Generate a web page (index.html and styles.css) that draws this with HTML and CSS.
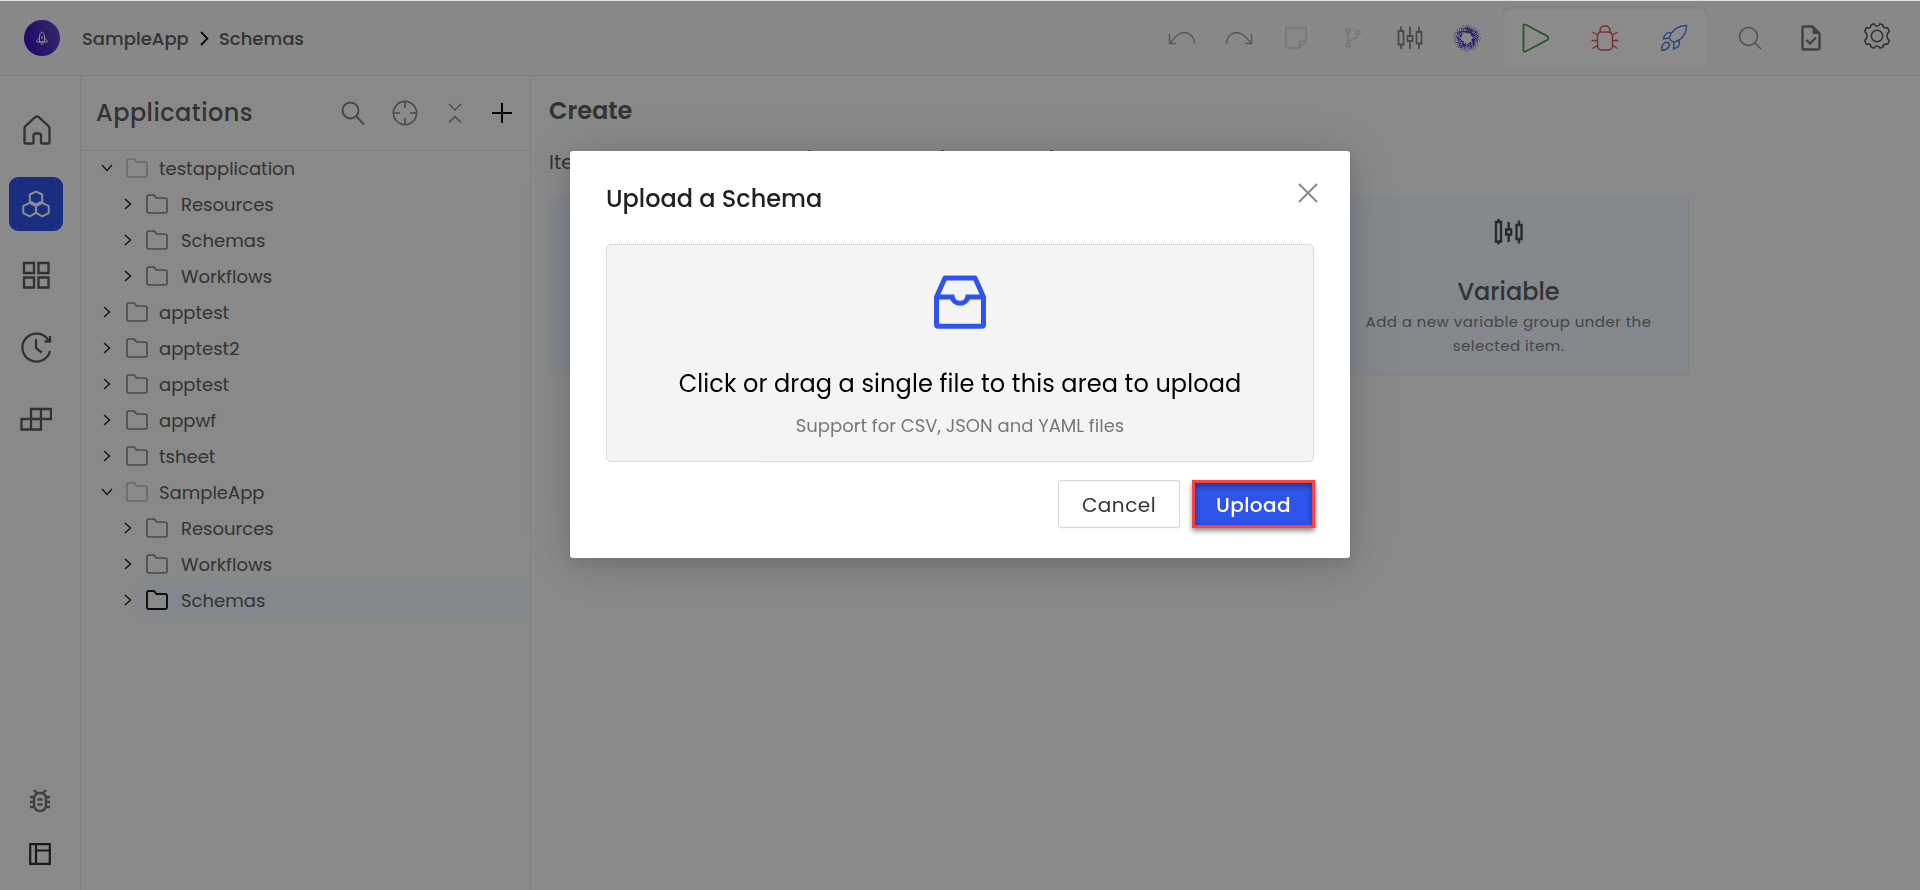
FILE: index.html
```html
<!DOCTYPE html>
<html lang="en">
<head>
<meta charset="utf-8">
<title>SampleApp - Schemas</title>
<link rel="stylesheet" href="styles.css">
</head>
<body>
<svg class="defs" aria-hidden="true">
  <symbol id="folder" viewBox="0 0 22 20"><path d="M1 3Q1 1 3 1H7.500Q8.500 1 9 2L10.500 4H19Q21 4 21 6V17Q21 19 19 19H3Q1 19 1 17Z"/></symbol>
  <symbol id="right" viewBox="0 0 8 12"><path d="M1 1L6.500 6L1 11"/></symbol>
  <symbol id="down" viewBox="0 0 12 8"><path d="M1 1L6 6.500L11 1"/></symbol>
</svg>
<div class="app">
  <header class="topbar">
    <div class="logo"><svg width="12" height="14" viewBox="0 0 12 14"><path d="M3.500 11V5Q3.800 2 6 .8Q8.200 2 8.500 5V11ZM3.500 7L1 9.500V11H11V9.500L8.500 7M6 5V8M4.500 13H7.500"/></svg></div>
    <nav class="crumbs">
      <span class="crumb-app">SampleApp</span>
      <svg width="9" height="15" viewBox="0 0 9 15"><path d="M1 1L7.500 7.500L1 14"/></svg>
      <span class="crumb-page">Schemas</span>
    </nav>
    <div class="tools">
      <svg class="faint undo" width="28" height="14" viewBox="0 0 28 14"><path d="M1.500 3V12.500H8M1.500 12.500L9 4.500Q16-1 22 3.500Q26.500 7 26.500 12.500"/></svg>
      <svg class="faint redo" width="28" height="14" viewBox="0 0 28 14"><path d="M26.500 3V12.500H20M26.500 12.500L19 4.500Q12-1 6 3.500Q1.500 7 1.500 12.500"/></svg>
      <svg class="ghost note" width="22" height="22" viewBox="0 0 22 22"><path d="M1 2.500Q1 1 2.500 1H19.500Q21 1 21 2.500V14.500L14.500 21H2.500Q1 21 1 19.500ZM14.500 21V14.500H21"/></svg>
      <svg class="ghost branch" width="16" height="20" viewBox="0 0 16 20"><circle cx="3" cy="3" r="2"/><circle cx="3" cy="17" r="2"/><circle cx="13" cy="4.500" r="2"/><path d="M3 5V15M13 6.500Q13 9.500 9 11L3 13"/></svg>
      <svg class="dark candles" width="26" height="24" viewBox="0 0 26 24"><path d="M1.500 5H6.500V18.500H1.500ZM4 .5V5M4 18.500V23M10.500 10H15.500V15H10.500ZM13 .5V10M13 15V23M19.500 6H24.500V17.500H19.500ZM22 .5V6M22 17.500V23"/></svg>
      <svg class="sparkle" id="sparkle" width="28" height="28" viewBox="0 0 28 28"></svg>
    </div>
    <div class="runbox">
      <svg class="play" width="28" height="30" viewBox="0 0 28 30"><path d="M1.500 3Q1.500.5 4 1.800L25 13Q27.500 15 25 17L4 28.200Q1.500 29.500 1.500 27Z"/></svg>
      <svg class="bug" width="28" height="26" viewBox="0 0 28 26"><path d="M9 7V6Q9 1 14 1Q19 1 19 6V7M11 7H17Q21.500 7 21.500 11.500V20Q21.500 25 17 25H11Q6.500 25 6.500 20V11.500Q6.500 7 11 7ZM6.500 10L1.500 7M21.500 10L26.500 7M6.500 15.500H.5M21.500 15.500H27.500M6.500 20.500L1.500 23.500M21.500 20.500L26.500 23.500"/></svg>
      <svg class="rocket" width="28" height="28" viewBox="0 0 28 28"><path d="M26.500 1.500Q17 1.500 11.500 9L9 14Q11 17.500 14 18.500L19 16Q26.500 11 26.500 1.500ZM11.500 9Q6.500 7.500 4 12.500L3.500 15L9 14M19 16Q20 20 18 23L13.500 25L14 18.500M2 26.500Q1 21 5 18.500Q9 17.500 9.500 21Q8 26 2 26.500Z"/></svg>
    </div>
    <div class="right-tools">
      <svg class="mid" width="24" height="24" viewBox="0 0 24 24"><circle cx="10.500" cy="10.500" r="9"/><path d="M16.800 16.800L23 23"/></svg>
      <svg class="doc" width="20" height="26" viewBox="0 0 20 26"><path class="doc-outline" d="M2.500 1.500H11.500L18.500 8.500V23Q18.500 24.500 17 24.500H3Q1.500 24.500 1.500 23V3Q1.500 1.500 3 1.500"/><path class="doc-fold" d="M11.500.5L19.500 9H11.500Z"/><path class="doc-check" d="M5.500 15L9 18.500L15 12.500"/></svg>
      <span class="gear-wrap"><svg class="gear" width="28" height="28" viewBox="0 0 28 28"><path d="M14 4.200Q16 4.200 17 1.700L20 3Q20 6 22.500 6Q24 5 25 6.500L26.300 9.500Q24 11 24 14Q24 17 26.300 18.500L25 21.500Q24 23 22.500 22Q20 22 20 25L17 26.300Q16 24 14 24Q12 24 11 26.300L8 25Q8 22 5.500 22Q4 23 3 21.500L1.700 18.500Q4 17 4 14Q4 11 1.700 9.500L3 6.500Q4 5 5.500 6Q8 6 8 3L11 1.700Q12 4.200 14 4.200Z"/><circle cx="14" cy="14" r="5.700"/></svg></span>
    </div>
  </header>
  <div class="body">
    <aside class="rail">
      <div class="rail-item home"><svg class="rail-icon" width="28" height="30" viewBox="0 0 28 30"><path d="M1.500 13.500Q1.500 12 2.500 11L12.500 2Q14 .8 15.500 2L25.500 11Q26.500 12 26.500 13.500V27Q26.500 28.500 25 28.500H19.500Q18 28.500 18 27V21Q18 18.500 16 18.500H12.500Q10.500 18.500 10.500 21V27Q10.500 28.500 9 28.500H3Q1.500 28.500 1.500 27Z"/></svg></div>
      <div class="rail-item active"><svg class="hex" width="28" height="28" viewBox="0 0 28 28"><path d="M14 1.500L20.200 4.500V11.500L14 14.500L7.800 11.500V4.500ZM7.600 12.800L13.900 16V23L7.600 26.300L1.300 23V16ZM20.400 12.800L26.700 16V23L20.400 26.300L14.100 23V16Z"/></svg></div>
      <div class="rail-item"><svg class="rail-icon" width="28" height="28" viewBox="0 0 28 28"><path d="M2 2H12V12H2ZM16.500 2H26.500V12H16.500ZM2 16.500H12V26.500H2ZM16.500 16.500H26.500V26.500H16.500Z"/></svg></div>
      <div class="rail-item"><svg class="rail-icon" width="32" height="32" viewBox="0 0 32 32"><path d="M28.500 9.500A14 14 0 1 0 30 20M16 8V17L21.500 21.500M30 5V10.500H24.500"/></svg></div>
      <div class="rail-item"><svg class="rail-icon" width="32" height="24" viewBox="0 0 32 24"><path d="M11 2H31V12H11ZM21 2V12M1.500 12H21V22.500H1.500ZM11 12V22.500"/></svg></div>
      <div class="rail-bottom">
        <svg class="debug" width="22" height="24" viewBox="0 0 22 24"><path d="M5 1L8 4H14L17 1M11 4Q17 4 17 10V15Q17 22 11 22Q5 22 5 15V10Q5 4 11 4ZM1 8H5M1 13H5M1 18H5M17 8H21M17 13H21M17 18H21M8.500 10.500H13.500M8.500 15.500H13.500"/></svg>
        <svg class="layout" width="22" height="22" viewBox="0 0 22 22"><path d="M1.200 1.200H20.800V20.800H1.200ZM7 1V21M7 7.500H21"/></svg>
      </div>
    </aside>
    <section class="panel">
      <div class="panel-head">
        <h2>Applications</h2>
        <div class="panel-tools">
          <svg class="p-search" width="24" height="25" viewBox="0 0 24 25"><circle cx="9.500" cy="9.500" r="8"/><path d="M15.500 15.500L23 23.500"/></svg>
          <svg class="p-target" width="26" height="26" viewBox="0 0 26 26"><circle cx="13" cy="13" r="11.600"/><path d="M13 1V8M13 18V25M1 13H8M18 13H25"/></svg>
          <svg class="p-fold" width="14" height="20" viewBox="0 0 14 20"><path d="M1 1L7 7L13 1M1 19.500L7 13.500L13 19.500"/></svg>
          <svg class="p-plus" width="20" height="20" viewBox="0 0 20 20"><path d="M10 0V20M0 10H20"/></svg>
        </div>
      </div>
      <ul class="tree">
        <li class="node open"><svg class="chev-down"><use href="#down"/></svg><svg class="folder"><use href="#folder"/></svg><span>testapplication</span></li>
        <li class="node child"><svg class="chev"><use href="#right"/></svg><div class="cell"><svg class="folder"><use href="#folder"/></svg><span>Resources</span></div></li>
        <li class="node child"><svg class="chev"><use href="#right"/></svg><div class="cell"><svg class="folder"><use href="#folder"/></svg><span>Schemas</span></div></li>
        <li class="node child"><svg class="chev"><use href="#right"/></svg><div class="cell"><svg class="folder"><use href="#folder"/></svg><span>Workflows</span></div></li>
        <li class="node"><svg class="chev"><use href="#right"/></svg><svg class="folder"><use href="#folder"/></svg><span>apptest</span></li>
        <li class="node"><svg class="chev"><use href="#right"/></svg><svg class="folder"><use href="#folder"/></svg><span>apptest2</span></li>
        <li class="node"><svg class="chev"><use href="#right"/></svg><svg class="folder"><use href="#folder"/></svg><span>apptest</span></li>
        <li class="node"><svg class="chev"><use href="#right"/></svg><svg class="folder"><use href="#folder"/></svg><span>appwf</span></li>
        <li class="node"><svg class="chev"><use href="#right"/></svg><svg class="folder"><use href="#folder"/></svg><span>tsheet</span></li>
        <li class="node open"><svg class="chev-down"><use href="#down"/></svg><svg class="folder"><use href="#folder"/></svg><span>SampleApp</span></li>
        <li class="node child"><svg class="chev"><use href="#right"/></svg><div class="cell"><svg class="folder"><use href="#folder"/></svg><span>Resources</span></div></li>
        <li class="node child"><svg class="chev"><use href="#right"/></svg><div class="cell"><svg class="folder"><use href="#folder"/></svg><span>Workflows</span></div></li>
        <li class="node child selected"><svg class="chev"><use href="#right"/></svg><div class="cell"><svg class="folder"><use href="#folder"/></svg><span>Schemas</span></div></li>
      </ul>
    </section>
    <main class="main">
      <h1>Create</h1>
      <p class="lead"><span class="seg-a">Items</span><span class="seg-b">/</span><span class="seg-c">/</span><span>/</span></p>
      <div class="cards">
        <div class="card"></div>
        <div class="card"></div>
        <div class="card">
          <svg class="card-icon" width="30" height="26" viewBox="0 0 30 26"><path d="M2 3H7V22.500H2ZM4.500 0V3M4.500 22.500V25.500M12.200 10.500H17.200V15.500H12.200ZM14.700 3V10.500M14.700 15.500V23M22.500 6H27.500V20H22.500ZM25 1.500V6M25 20V24.500"/></svg>
          <h3>Variable</h3>
          <p>Add a new variable group under the<br>selected item.</p>
        </div>
      </div>
    </main>
  </div>
</div>
<div class="mask">
  <div class="modal">
    <div class="modal-head">
      <h2>Upload a Schema</h2>
      <svg width="20" height="20" viewBox="0 0 20 20"><path d="M1 1L19 19M19 1L1 19"/></svg>
    </div>
    <div class="dragger">
      <svg class="inbox" width="54" height="54" viewBox="0 0 54 54"><path d="M3.500 22L12 3H42L50.500 22V49.500Q50.500 51.300 48.500 51.300H5.500Q3.500 51.300 3.500 49.500Z"/><path class="inbox-slot" d="M3.500 22H19.200A7.900 7.500 0 0 0 34.800 22H50.500"/></svg>
      <p class="drag-title">Click or drag a single file to this area to upload</p>
      <p class="drag-hint">Support for CSV, JSON and YAML files</p>
    </div>
    <div class="actions">
      <button class="btn cancel">Cancel</button>
      <button class="btn upload">Upload</button>
    </div>
  </div>
</div>
<script src="sparkle.js"></script>
</body>
</html>
```
FILE: sparkle.js
```javascript
// Scatters small dots in a ring for the assistant icon.
const svg = document.getElementById('sparkle');
const rand = n => { const v = Math.sin(n * 127.1) * 43758.5453; return v - Math.floor(v); };
const count = 150;
for (let i = 0; i < count; i++) {
  const angle = i * 2.39996;
  const t = (i + rand(i + 1)) / count;
  const radius = 5.5 + t * 8;
  const size = t > 0.7 ? 0.5 : 0.45 + rand(i + 900) * 0.65;
  const dot = document.createElementNS('http://www.w3.org/2000/svg', 'circle');
  dot.setAttribute('cx', (14 + Math.cos(angle) * radius).toFixed(2));
  dot.setAttribute('cy', (14 + Math.sin(angle) * radius).toFixed(2));
  dot.setAttribute('r', size.toFixed(2));
  svg.appendChild(dot);
}
```
FILE: styles.css
```css
* { box-sizing: border-box; }
body {
  margin: 0;
  height: 890px;
  overflow: hidden;
  background: #f9f9f9;
  border-top: 1px solid #dfe5e2;
  color: #5e5e5e;
  font-family: Poppins, Inter, "Open Sans", sans-serif;
}
h1, h2, h3, p, ul { margin: 0; padding: 0; }
svg { fill: none; stroke: currentColor; stroke-width: 1.4; flex: none; display: block; }
.defs { position: absolute; width: 0; height: 0; }
.app { height: 889px; display: flex; flex-direction: column; }

/* Top bar */
.topbar { height: 75px; flex: none; display: flex; align-items: flex-start; border-bottom: 1px solid #e5e5e5; background: #f8f8f8; }
.logo { width: 36px; height: 36px; margin: 19px 0 0 24px; border-radius: 50%; background: linear-gradient(70deg, #3505b8, #634fc8); display: flex; align-items: center; justify-content: center; color: #fff; }
.logo svg { stroke-width: 1; }
.crumbs { margin: 24px 0 0 22px; display: flex; align-items: center; height: 26px; width: 1064px; font-size: 18px; font-weight: 500; }
.crumbs svg { color: #111; stroke-width: 1.8; margin: 0 10px 0 11px; }
.crumb-app { width: 107px; }
.tools { display: flex; align-items: center; height: 74px; width: 333px; margin-left: 23px; }
.faint { color: #9da0a8; }
.ghost { color: #d8d8d8; stroke-width: 1.7; }
.undo { margin-left: -1px; }
.redo { margin-left: 29px; }
.note { margin-left: 32px; }
.branch { margin-left: 38px; }
.dark { color: #858585; stroke-width: 1.8; }
.candles { margin-left: 36px; }
.sparkle { fill: #3e20c4; stroke: none; margin-left: 30px; }
.runbox { display: flex; align-items: center; width: 206px; height: 63px; margin-top: 6px; padding: 0 0 2px 20px; border-radius: 8px; background: #fdfdfd; box-shadow: inset 0 1px 3px #dadada; }
.play { color: #489a52; stroke-width: 1.8; }
.bug { color: #d95c58; margin-left: 41px; }
.rocket { color: #507fdc; margin-left: 41px; }
.right-tools { display: flex; align-items: center; height: 74px; }
.mid { color: #8b8b8b; margin-left: 30px; }
.doc { color: #777; margin-left: 39px; }
.doc-outline { stroke-width: 2.4; }
.doc-fold { fill: currentColor; stroke: none; }
.doc-check { stroke-width: 2.3; }
.gear-wrap { margin-left: 38px; width: 36px; height: 36px; border: 1px solid #f3f3f3; border-radius: 50%; display: flex; align-items: center; justify-content: center; padding-bottom: 4px; }
.gear { color: #555b67; stroke-width: 1.6; }

.body { flex: 1; display: flex; min-height: 0; }

/* Icon rail */
.rail { width: 81px; border-right: 1px solid #e5e5e5; padding: 27px 0 25px 9px; display: flex; flex-direction: column; gap: 18px; }
.rail-item { width: 54px; height: 54px; border-radius: 9px; display: flex; align-items: center; justify-content: center; color: #5a5a5a; }
.home { margin-bottom: 2px; padding-left: 1px; }
.rail-icon { stroke-width: 2.3; }
.active { background: #2f54eb; color: #fff; margin-bottom: -1px; }
.hex { stroke-width: 2; }
.rail-bottom { margin-top: auto; margin-left: 20px; display: flex; flex-direction: column; gap: 30px; }
.debug { stroke-width: 2.4; color: #777; }
.layout { stroke-width: 2.2; color: #303030; }

/* Application tree */
.panel { width: 450px; border-right: 1px solid #ececec; }
.panel-head { height: 75px; border-bottom: 1px solid #e3e3e3; padding: 0 18px 0 15px; display: flex; justify-content: space-between; align-items: center; }
.panel-head h2 { font-size: 24px; line-height: 36px; font-weight: 500; letter-spacing: .45px; padding-bottom: 1px; }
.panel-tools { display: flex; align-items: center; }
.p-search { color: #83838a; stroke-width: 2; margin-right: 27px; }
.p-target { color: #88888a; stroke-width: 1.6; margin-right: 30px; }
.p-fold { color: #8a8a8a; margin-right: 30px; }
.p-plus { color: #080808; stroke-width: 2; }
.tree { list-style: none; margin-top: -1px; }
.node { height: 36px; padding-left: 22px; display: flex; align-items: center; font-size: 18px; font-weight: 400; }
.chev { width: 8px; height: 12px; color: #222; margin: 0 15px 0 0; }
.chev-down { width: 12px; height: 8px; color: #333; margin-right: 13px; }
.folder { width: 22px; height: 20px; color: #858585; stroke-width: 1.6; margin-right: 11px; }
.node .folder { fill: #fafafa; }
.open .folder { color: #bebebe; }
.open { padding-left: 20px; }
.child { padding-left: 43px; }
.child .chev { margin-right: 3px; }
.cell { flex: 1; height: 36px; display: flex; align-items: center; padding-left: 11px; border-radius: 6px 0 0 6px; }
.cell .folder { margin-right: 13px; }
.selected .cell { background: #f0f7ff; }
.selected .folder { color: #171717; stroke-width: 1.9; }

/* Main */
.main { flex: 1; padding: 17px 0 0 18px; }
.main h1 { font-size: 24px; line-height: 36px; font-weight: 600; }
.lead { font-size: 20px; line-height: 30px; margin-top: 18px; font-weight: 400; display: flex; }
.seg-a { width: 253px; }
.seg-b { width: 133px; }
.seg-c { width: 109px; }
.cards { display: grid; grid-template-columns: repeat(3, 361px); gap: 28.5px; margin-top: 19px; }
.card { height: 180px; background: #f0f7ff; border: 1px solid #e8eef6; border-radius: 4px; display: flex; flex-direction: column; align-items: center; text-align: center; padding-top: 22px; }
.card-icon { stroke-width: 2.4; color: #4e4e4e; }
.card h3 { font-size: 24px; line-height: 36px; font-weight: 500; margin-top: 29px; }
.card p { font-size: 15px; line-height: 24px; color: #7d8087; letter-spacing: .45px; }

/* Dialog */
.mask { position: fixed; top: 1px; left: 0; right: 0; bottom: 0; background: rgba(0, 0, 0, .45); display: flex; align-items: flex-start; justify-content: center; padding-top: 150px; }
.modal { width: 780px; height: 407px; background: #fff; border-radius: 3px; padding: 28px 36px 0; box-shadow: 0 9px 28px 8px rgba(0, 0, 0, .05), 0 6px 16px rgba(0, 0, 0, .08), 0 3px 60px rgba(0, 0, 0, .12); color: #222; }
.modal-head { display: flex; justify-content: space-between; align-items: center; height: 38px; }
.modal-head h2 { font-size: 24px; font-weight: 500; line-height: 38px; color: #222; padding-top: 2px; }
.modal-head svg { color: #888; stroke-width: 1.9; margin: 0 -4px 10px 0; }
.dragger { height: 218px; margin-top: 27px; background: #f4f4f4; border: 1px dotted #bfbfc4; border-radius: 5px; display: flex; flex-direction: column; align-items: center; padding-top: 30px; }
.inbox { color: #2f54eb; stroke-width: 5; stroke-linejoin: round; }
.inbox-slot { stroke-linejoin: miter; }
.drag-title { font-size: 24px; line-height: 36px; margin-top: 37px; color: #000; letter-spacing: .11px; white-space: nowrap; }
.drag-hint { font-size: 18px; line-height: 28px; margin-top: 10px; color: #777; font-weight: 400; white-space: nowrap; }
.actions { display: flex; justify-content: flex-end; gap: 12px; margin: 18px -1px 0 0; }
.btn { height: 48px; font: 400 20px Poppins, Inter, "Open Sans", sans-serif; letter-spacing: .5px; border-radius: 3px; padding: 1px 0 0; }
.cancel { width: 122px; border: 1px solid #d5d5d5; background: #fff; color: #333; box-shadow: 0 3px 0 #fafafa; }
.upload { width: 123px; border: 3px solid #ff4043; border-radius: 0; background: #2f54eb; color: #fff; font-weight: 500; letter-spacing: .4px; box-shadow: 0 3px 5px rgba(0, 0, 0, .45), inset 0 3px 6px rgba(0, 0, 0, .4); }
```
